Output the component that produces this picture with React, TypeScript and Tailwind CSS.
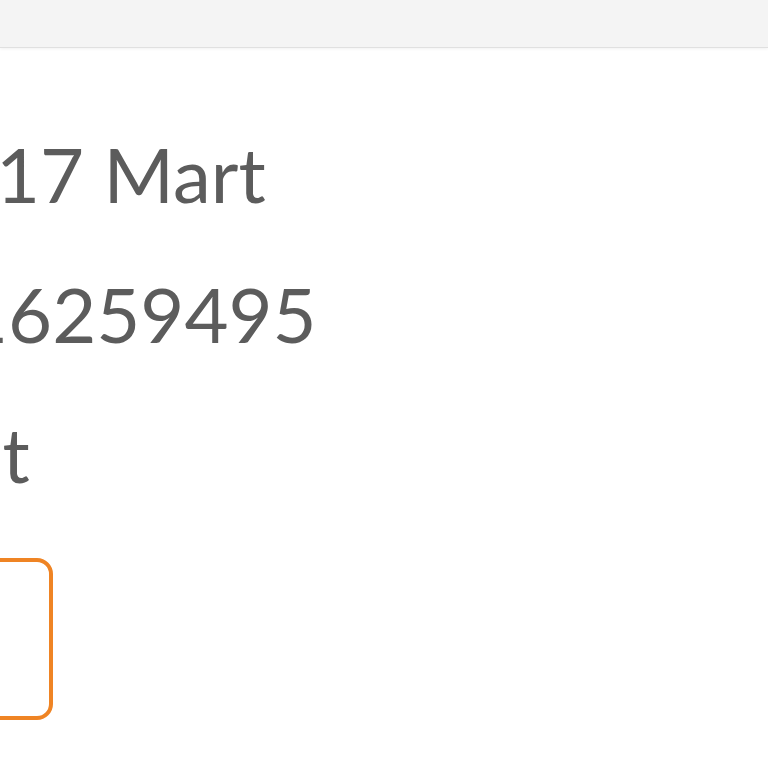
export default function App() {
  const lines = [
    { text: '17 Mart', offset: '-ml-[4px]' },
    { text: '16259495', offset: '-ml-[36px]' },
    { text: 'Nakit', offset: '-ml-[149px]' },
  ];

  return (
    <div className="w-[768px] h-[768px] overflow-hidden bg-white font-['Lato','Noto_Sans',sans-serif]">
      {/* top bar */}
      <div className="h-[48px] bg-[#f4f4f4] border-b border-[#e0e0e0] shadow-[0_1px_3px_rgba(0,0,0,0.06)]" />

      <div className="pt-[56px]">
        {lines.map((line) => (
          <div
            key={line.text}
            className={`${line.offset} text-[76px] leading-[140px] text-[#5c5c5c] whitespace-nowrap`}
          >
            {line.text}
          </div>
        ))}

        <div className="-ml-[200px] mt-[34px] w-[253px] h-[162px] rounded-2xl border-[4px] border-[#ef8424]" />
      </div>
    </div>
  );
}
